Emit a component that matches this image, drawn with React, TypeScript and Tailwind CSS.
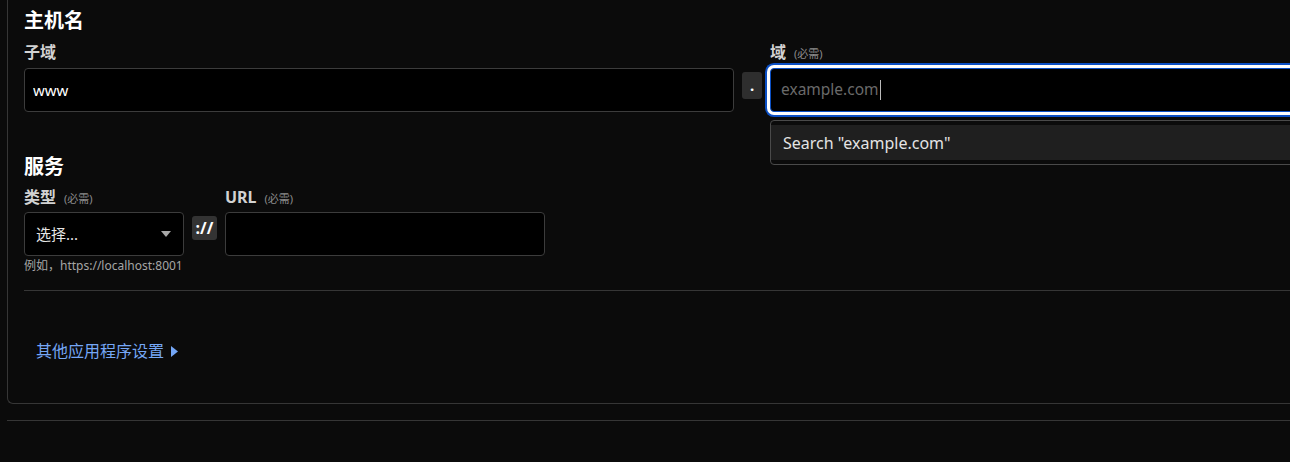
const font = "font-['Noto_Sans','Noto_Sans_CJK_SC',sans-serif]";

function Label({ text, required }: { text: string; required?: boolean }) {
  return (
    <div className="flex h-5 items-baseline gap-2 overflow-visible text-[16px] leading-5 font-bold text-[#d2d2d2]">
      <span>{text}</span>
      {required && <span className="text-[11px] leading-5 font-normal text-[#8c8c8c]">(必需)</span>}
    </div>
  );
}

function Heading({ children }: { children: React.ReactNode }) {
  return <h2 className="text-[20px] leading-6 font-bold text-white">{children}</h2>;
}

function Hostname() {
  return (
    <section className="pt-[9px]">
      <Heading>主机名</Heading>
      <div className="mt-[9px] grid grid-cols-[710px_20px_710px] gap-x-2 gap-y-[6px]">
        <Label text="子域" />
        <div />
        <Label text="域" required />

        <input
          readOnly
          value="www"
          className="h-11 rounded border border-[#3c3c3c] bg-black px-2 text-[15px] text-white outline-none"
        />
        <div className="mt-1 flex h-[27px] items-center justify-center rounded-[3px] bg-[#2e2e2e] text-[15px] font-bold text-white">
          .
        </div>
        <div className="relative">
          <div className="flex h-11 items-center rounded border border-[#0b4fc4] bg-black px-[10px] text-[15.5px] shadow-[0_0_0_3px_#ffffff,0_0_0_5px_#0b4fc4]">
            <span className="text-[#6a6a6a]">example.com</span>
            <span className="ml-px h-5 w-px bg-[#bbbbbb]" />
          </div>
          <div className="absolute left-0 right-0 top-[52px] rounded border border-[#4a4a4a] bg-[#0b0b0b] py-1">
            <div className="flex h-[35px] items-center bg-[#1f1f1f] px-3 text-[16px] text-[#e4e4e4]">
              Search "example.com"
            </div>
          </div>
        </div>
      </div>
    </section>
  );
}

function Service() {
  return (
    <section className="mt-[43px]">
      <Heading>服务</Heading>
      <div className="mt-[8px] flex gap-2">
        <div className="flex w-[160px] flex-col gap-[5px]">
          <Label text="类型" required />
          <div className="flex h-11 items-center justify-between rounded border border-[#3c3c3c] bg-black pl-[11px] pr-[12px] text-[15px] text-[#e6e6e6]">
            <span>选择...</span>
            <svg width="10" height="6" viewBox="0 0 10 6" className="text-[#a8a8a8]">
              <path d="M0 0h10L5 6z" fill="currentColor" />
            </svg>
          </div>
          <p className="-mt-[3px] whitespace-nowrap text-[12px] leading-4 text-[#a6a6a6]">例如，https://localhost:8001</p>
        </div>
        <div className="mt-[29px] flex h-6 w-[25px] items-center justify-center rounded-[3px] bg-[#333333] text-[16px] font-bold text-white">
          ://
        </div>
        <div className="flex w-[320px] flex-col gap-[5px]">
          <Label text="URL" required />
          <div className="h-11 rounded border border-[#3c3c3c] bg-black" />
        </div>
      </div>
    </section>
  );
}

export default function App() {
  return (
    <div className={`h-[462px] w-[1290px] overflow-hidden bg-[#0b0b0b] ${font}`}>
      <div className="ml-[7px] w-[1490px] rounded-bl-[6px] border-b border-l border-[#363636] px-4 pb-[41px]">
        <Hostname />
        <Service />
        <div className="mt-4 border-t border-[#363636]" />
        <button className="mt-[49px] ml-3 flex items-center gap-[7px] text-[16px] leading-[22px] text-[#75a7f6]">
          其他应用程序设置
          <svg width="7" height="11" viewBox="0 0 7 11">
            <path d="M0 0l7 5.5L0 11z" fill="currentColor" />
          </svg>
        </button>
      </div>
      <div className="ml-[7px] mt-4 border-t border-[#363636]" />
    </div>
  );
}
